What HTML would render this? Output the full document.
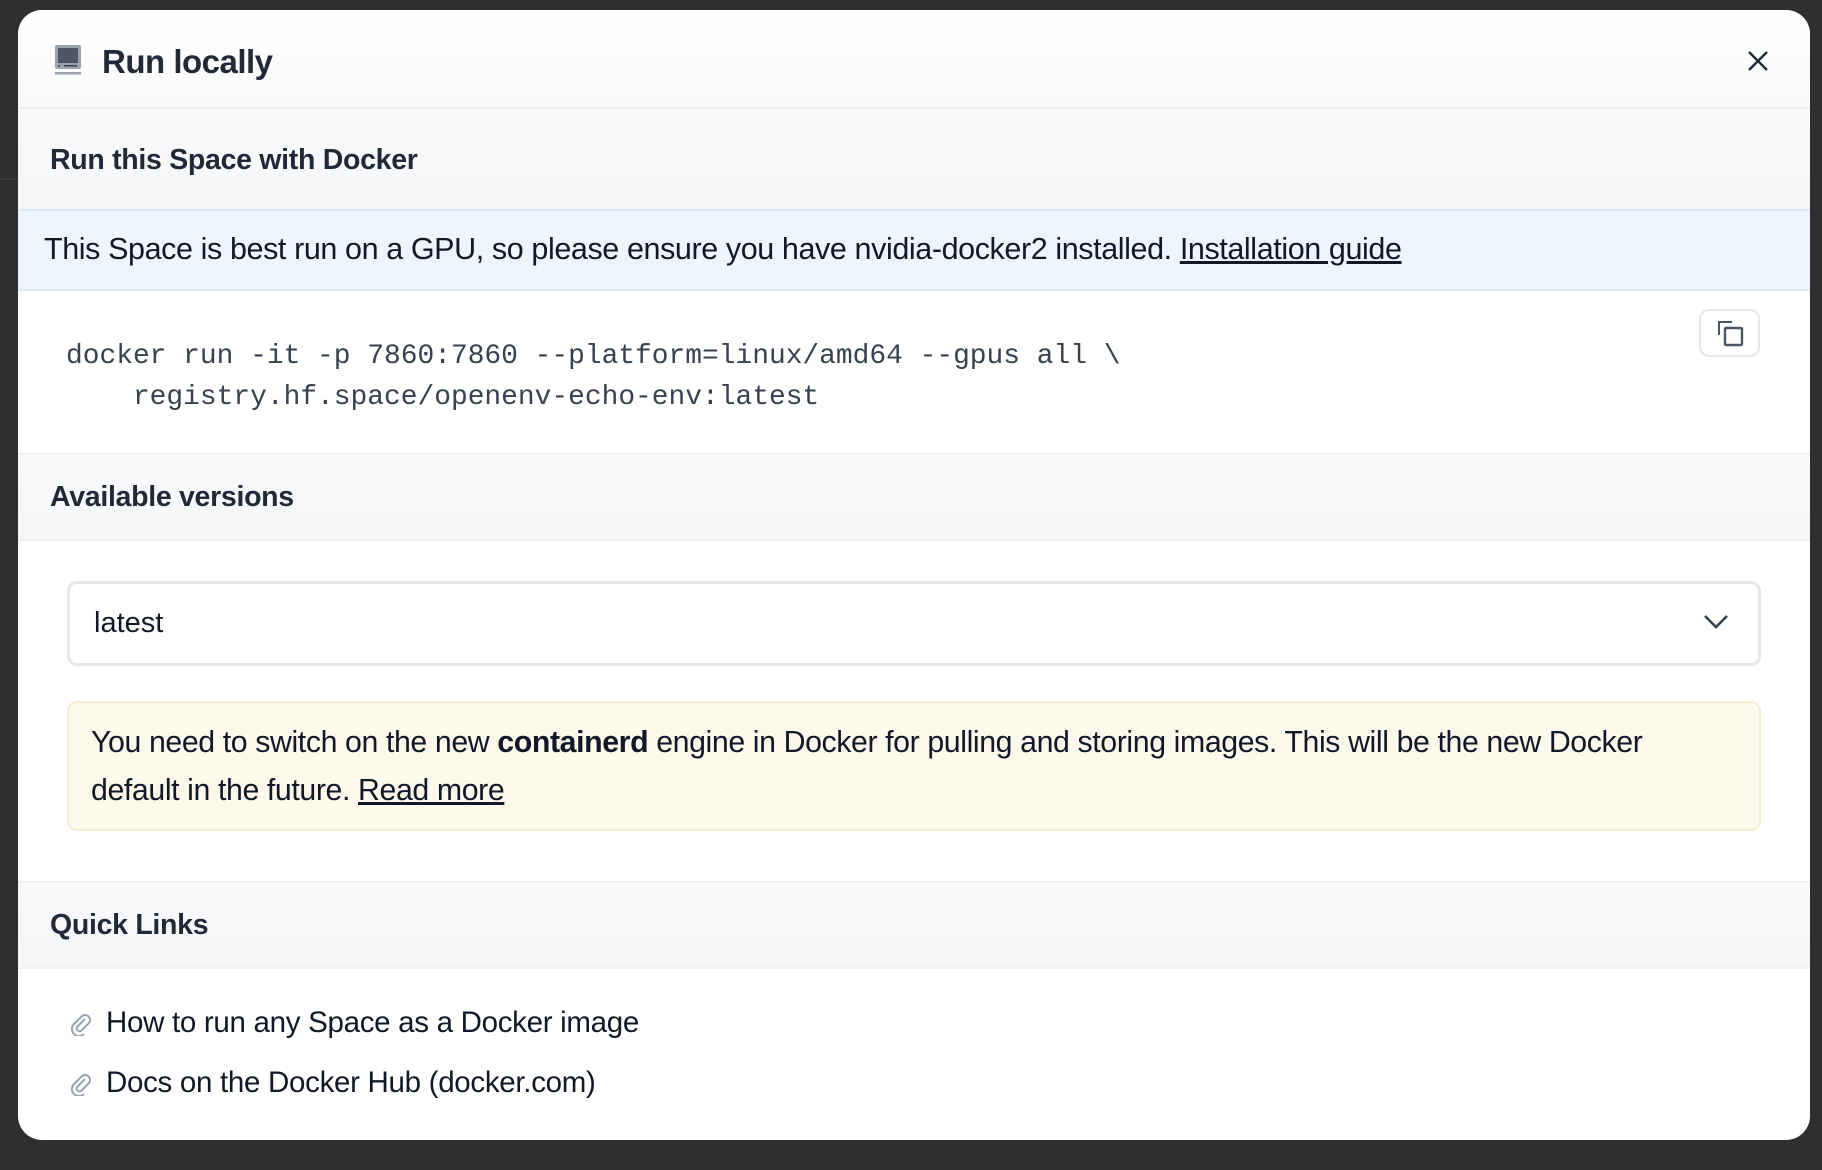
<!DOCTYPE html>
<html><head><meta charset="utf-8"><style>
*{box-sizing:border-box;margin:0;padding:0}
body{width:1822px;height:1170px;background:#2f2f2f;font-family:"Liberation Sans",sans-serif;color:#111827;position:relative;overflow:hidden}
.bgl{position:absolute;background:#3a3a3a}
.modal{position:absolute;left:18px;top:10px;width:1792px;height:1130px;background:#fff;border-radius:24px;overflow:hidden}
.hdr{height:99px;border-bottom:2px solid #eef0f3;position:relative;background:linear-gradient(#fff,#f9fafb)}
.hdr h1{position:absolute;left:84px;top:33px;font-size:33px;font-weight:bold;color:#1f2937;letter-spacing:-0.5px}
.sec{background:linear-gradient(#f9fafb,#f5f6f8);position:relative;font-weight:bold;color:#1f2937;font-size:28.5px;letter-spacing:-0.3px}
.sec span{position:absolute;left:32px}
.blue{position:absolute;left:0;top:199px;width:100%;height:82px;background:#eff5fe;border-top:2px solid #dbe8fb;border-bottom:2px solid #dbe8fb;font-size:30.5px;padding:21px 0 0 26px;letter-spacing:-0.4px}
u{text-decoration:underline}
.code{position:absolute;left:48px;top:326px;font-family:"Liberation Mono",monospace;font-size:27.9px;line-height:41px;color:#374151;white-space:pre}
.copy{position:absolute;left:1681px;top:299px;width:61px;height:48px;border:2px solid #e5e7eb;border-radius:10px;background:#fff}
.sel{position:absolute;left:49px;top:571px;width:1694px;height:85px;border:3px solid #e5e7eb;border-radius:10px;font-size:29px;padding:23px 0 0 24px}
.warn{position:absolute;left:49px;top:691px;width:1694px;height:130px;background:#fcf8ec;border:2px solid #f6ecce;border-radius:10px;font-size:30.3px;line-height:48px;padding:16px 22px;letter-spacing:-0.4px}
.lnk{position:absolute;left:88px;font-size:29.5px;letter-spacing:-0.3px}
.clip{position:absolute;left:52px}
</style></head><body>
<div class="bgl" style="left:0;top:178px;width:18px;height:2px"></div>
<div class="modal">
 <div class="hdr">
  <svg style="position:absolute;left:36px;top:34px" width="28" height="32" viewBox="0 0 28 32"><rect x="1" y="1" width="26" height="24" rx="2" fill="#9ca3af"/><rect x="4" y="4" width="20" height="15" fill="#4b5563"/><rect x="10" y="21" width="13" height="1.5" fill="#374151"/><rect x="4" y="21" width="2" height="1.5" fill="#374151"/><rect x="1" y="28" width="26" height="2.5" fill="#9ca3af"/></svg>
  <h1>Run locally</h1>
  <svg style="position:absolute;left:1729px;top:40px" width="22" height="22" viewBox="0 0 22 22"><path d="M2 2L20 20M20 2L2 20" stroke="#1f2937" stroke-width="2.4"/></svg>
 </div>
 <div class="sec" style="position:absolute;top:99px;width:100%;height:100px"><span style="top:35px">Run this Space with Docker</span></div>
 <div class="blue">This Space is best run on a GPU, so please ensure you have nvidia-docker2 installed. <u>Installation guide</u></div>
 <div class="code">docker run -it -p 7860:7860 --platform=linux/amd64 --gpus all \
    registry.hf.space/openenv-echo-env:latest</div>
 <div class="copy"><svg style="position:absolute;left:17px;top:10px" width="26" height="26" viewBox="0 0 26 26"><path d="M1 14V1H14" fill="none" stroke="#4b5563" stroke-width="2"/><rect x="7" y="7" width="17" height="17" rx="1" fill="none" stroke="#4b5563" stroke-width="2.4"/></svg></div>
 <div class="sec" style="position:absolute;top:443px;width:100%;height:88px;border-top:2px solid #eef0f3;border-bottom:2px solid #eef0f3"><span style="top:26px">Available versions</span></div>
 <div class="sel">latest<svg style="position:absolute;left:1633px;top:30px" width="26" height="16" viewBox="0 0 26 16"><path d="M2 2L13 13L24 2" fill="none" stroke="#374151" stroke-width="2.6"/></svg></div>
 <div class="warn">You need to switch on the new <b>containerd</b> engine in Docker for pulling and storing images. This will be the new Docker<br>default in the future. <u>Read more</u></div>
 <div class="sec" style="position:absolute;top:871px;width:100%;height:88px;border-top:2px solid #eef0f3;border-bottom:2px solid #eef0f3"><span style="top:26px">Quick Links</span></div>
 <svg class="clip" style="top:1002px" width="22" height="24" viewBox="0 0 22 24"><path d="M15 7L7 15a3 3 0 0 0 4 4L19 11a5 5 0 0 0-7-7L4 12a7 7 0 0 0 10 10" fill="none" stroke="#9ca3af" stroke-width="2"/></svg>
 <div class="lnk" style="top:996px">How to run any Space as a Docker image</div>
 <svg class="clip" style="top:1062px" width="22" height="24" viewBox="0 0 22 24"><path d="M15 7L7 15a3 3 0 0 0 4 4L19 11a5 5 0 0 0-7-7L4 12a7 7 0 0 0 10 10" fill="none" stroke="#9ca3af" stroke-width="2"/></svg>
 <div class="lnk" style="top:1056px">Docs on the Docker Hub (docker.com)</div>
</div>
</body></html>
